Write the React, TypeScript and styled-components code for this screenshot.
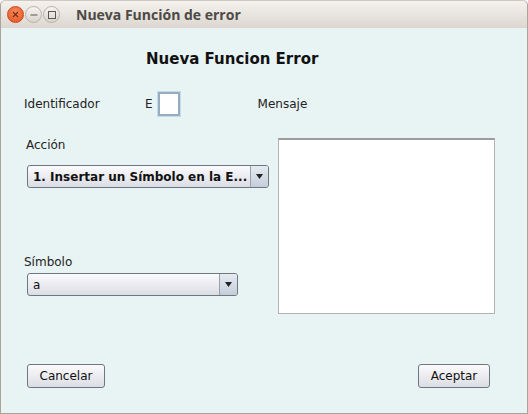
import * as React from "react";
import styled, { createGlobalStyle } from "styled-components";

const GlobalStyle = createGlobalStyle`
  html, body {
    margin: 0;
    padding: 0;
    background: #ffffff;
  }
  body {
    font-family: "DejaVu Sans", "Liberation Sans", sans-serif;
  }
`;

const Window = styled.div`
  width: 528px;
  height: 414px;
  box-sizing: border-box;
  border: 1px solid #aaa49a;
  border-top: none;
  border-radius: 5px 5px 0 0;
  display: flex;
  flex-direction: column;
  overflow: hidden;
  background: #e8f4f4;
`;

const TitleBar = styled.div`
  height: 28px;
  flex: none;
  box-sizing: border-box;
  display: flex;
  align-items: center;
  padding-left: 6px;
  background: linear-gradient(#f4f2ee, #dcd6cf);
  border-top: 1px solid #cfc9c0;
  border-radius: 5px 5px 0 0;
`;

const WinButtons = styled.div`
  display: flex;
  gap: 1px;
  align-items: center;
`;

const WinButton = styled.div<{ $close?: boolean }>`
  width: 17px;
  height: 17px;
  border-radius: 50%;
  box-sizing: border-box;
  display: flex;
  align-items: center;
  justify-content: center;
  background: ${(p) =>
    p.$close
      ? "radial-gradient(circle at 50% 35%, #f78a5e, #e2521d)"
      : "linear-gradient(#f6f4f1, #d8d3cc)"};
  border: 1px solid ${(p) => (p.$close ? "#c64a1c" : "#b8b2aa")};
`;

const WinTitle = styled.div`
  margin-left: 16px;
  font-family: "Open Sans", "DejaVu Sans", sans-serif;
  font-weight: 700;
  font-size: 14px;
  color: #4c4a46;
`;

const Content = styled.div`
  flex: 1;
  display: flex;
  flex-direction: column;
  padding: 0 0 0 23px;
  font-size: 12px;
  color: #222222;
`;

const Heading = styled.div`
  margin: 21px 0 0 122px;
  font-weight: 700;
  font-size: 15px;
  color: #111111;
  line-height: 20px;
`;

const IdRow = styled.div`
  display: flex;
  align-items: center;
  margin-top: 23px;
  height: 24px;
`;

const Label = styled.span<{ $w?: number }>`
  display: inline-block;
  width: ${(p) => (p.$w ? `${p.$w}px` : "auto")};
  font-size: 12px;
  color: #222222;
  white-space: nowrap;
`;

const IdField = styled.div`
  width: 22px;
  height: 24px;
  box-sizing: border-box;
  margin-left: 5px;
  background: #ffffff;
  border: 2px solid #98acc0;
  box-shadow: 0 0 0 1px #c6dbe8;
  margin-right: 78px;
`;

const Body = styled.div`
  display: flex;
  margin-top: 22px;
`;

const LeftCol = styled.div`
  width: 254px;
  display: flex;
  flex-direction: column;
`;

const FieldLabel = styled.div<{ $top: number; $indent: number }>`
  margin-top: ${(p) => p.$top}px;
  padding-left: ${(p) => p.$indent}px;
  font-size: 12px;
  line-height: 14px;
  color: #222222;
`;

const Combo = styled.div<{ $w: number; $top: number; $bold?: boolean }>`
  width: ${(p) => p.$w}px;
  height: 23px;
  box-sizing: border-box;
  margin: ${(p) => p.$top}px 0 0 3px;
  display: flex;
  border: 1px solid #6e7680;
  border-radius: 3px;
  background: linear-gradient(#fbfbfd, #dcdde4);
  overflow: hidden;
  font-weight: ${(p) => (p.$bold ? 700 : 400)};
  font-size: 12px;
  color: #111111;
`;

const ComboText = styled.div`
  flex: 1;
  display: flex;
  align-items: center;
  padding-left: 5px;
  white-space: nowrap;
  overflow: hidden;
`;

const ComboArrow = styled.div`
  width: 17px;
  border-left: 1px solid #98a0ac;
  background: linear-gradient(#e6ebf2, #c4cdd9);
  display: flex;
  align-items: center;
  justify-content: center;
`;

const MessageArea = styled.div`
  width: 217px;
  height: 176px;
  box-sizing: border-box;
  background: #ffffff;
  border: 1px solid #b4b4b4;
  border-top: 2px solid #9c9c9c;
`;

const Footer = styled.div`
  display: flex;
  justify-content: space-between;
  margin-top: 50px;
  padding-right: 37px;
`;

const Button = styled.button<{ $w: number }>`
  width: ${(p) => p.$w}px;
  height: 24px;
  margin-left: 3px;
  box-sizing: border-box;
  border: 1px solid #6e7680;
  border-radius: 3px;
  background: linear-gradient(#fbfbfd, #dcdde4);
  font-family: "DejaVu Sans", "Liberation Sans", sans-serif;
  font-size: 12px;
  color: #111111;
  padding: 0;
`;

const Arrow = () => (
  <svg width="7" height="5" viewBox="0 0 7 5">
    <path d="M0 0 L7 0 L3.5 5 Z" fill="#222" />
  </svg>
);

export default function App() {
  return (
    <>
      <GlobalStyle />
      <Window>
        <TitleBar>
          <WinButtons>
            <WinButton $close>
              <svg width="7" height="7" viewBox="0 0 7 7">
                <path d="M1 1 L6 6 M6 1 L1 6" stroke="#7a2a0e" strokeWidth="1.2" />
              </svg>
            </WinButton>
            <WinButton>
              <svg width="8" height="8" viewBox="0 0 8 8">
                <path d="M0.5 4 H7.5" stroke="#5a5650" strokeWidth="1" />
              </svg>
            </WinButton>
            <WinButton>
              <svg width="8" height="8" viewBox="0 0 8 8">
                <rect x="0.5" y="0.5" width="7" height="7" fill="none" stroke="#5a5650" strokeWidth="1" />
              </svg>
            </WinButton>
          </WinButtons>
          <WinTitle>Nueva Función de error</WinTitle>
        </TitleBar>
        <Content>
          <Heading>Nueva Funcion Error</Heading>
          <IdRow>
            <Label $w={121}>Identificador</Label>
            <Label>E</Label>
            <IdField />
            <Label>Mensaje</Label>
          </IdRow>
          <Body>
            <LeftCol>
              <FieldLabel $top={0} $indent={2}>Acción</FieldLabel>
              <Combo $w={242} $top={13} $bold>
                <ComboText>1. Insertar un Símbolo en la E...</ComboText>
                <ComboArrow>
                  <Arrow />
                </ComboArrow>
              </Combo>
              <FieldLabel $top={67} $indent={0}>Símbolo</FieldLabel>
              <Combo $w={211} $top={4}>
                <ComboText>a</ComboText>
                <ComboArrow>
                  <Arrow />
                </ComboArrow>
              </Combo>
            </LeftCol>
            <MessageArea />
          </Body>
          <Footer>
            <Button $w={78}>Cancelar</Button>
            <Button $w={72}>Aceptar</Button>
          </Footer>
        </Content>
      </Window>
    </>
  );
}
